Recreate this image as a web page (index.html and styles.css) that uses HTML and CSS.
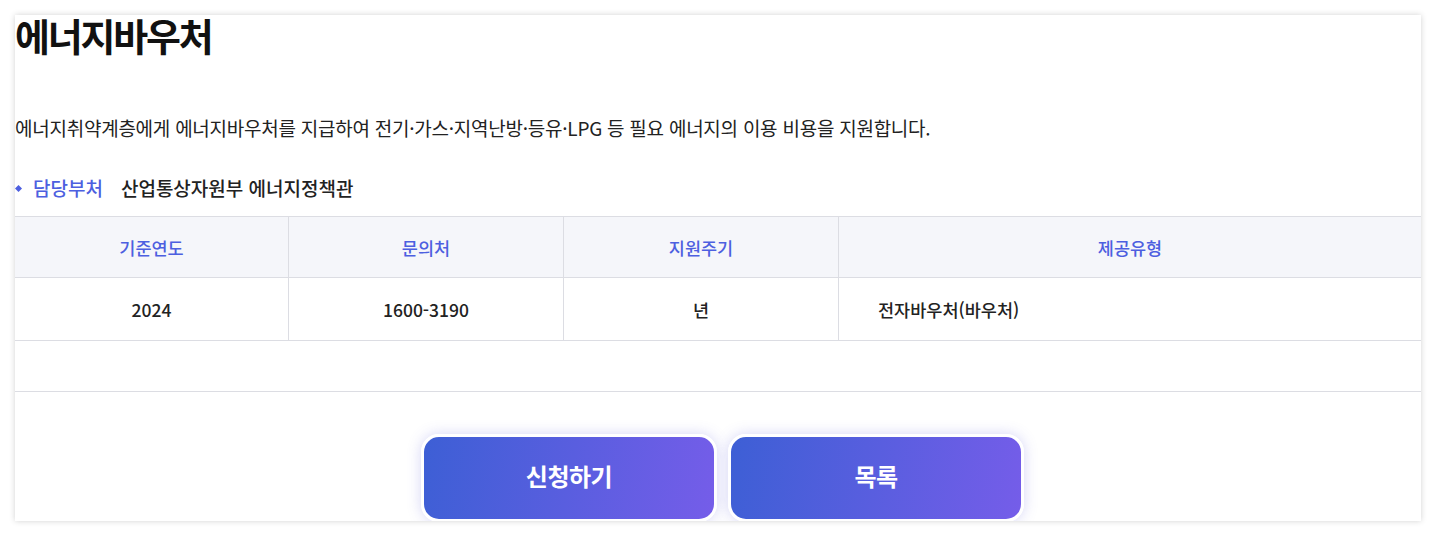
FILE: index.html
```html
<!DOCTYPE html>
<html lang="ko">
<head>
    <meta charset="UTF-8">
    <meta name="viewport" content="width=device-width, initial-scale=1.0">
    <title>에너지바우처</title>
    <link rel="stylesheet" href="styles.css">
</head>
<body>
    <div class="card">
        <h2 class="title">에너지바우처</h2>
        <p class="desc">에너지취약계층에게 에너지바우처를 지급하여 전기·가스·지역난방·등유·LPG 등 필요 에너지의 이용 비용을 지원합니다.</p>

        <div class="dept">
            <span class="dept-label">담당부처</span>
            <span class="dept-name">산업통상자원부 에너지정책관</span>
        </div>

        <table class="info">
            <thead>
                <tr>
                    <th class="c1">기준연도</th>
                    <th class="c2">문의처</th>
                    <th class="c3">지원주기</th>
                    <th>제공유형</th>
                </tr>
            </thead>
            <tbody>
                <tr>
                    <td>2024</td>
                    <td>1600-3190</td>
                    <td>년</td>
                    <td class="left">전자바우처(바우처)</td>
                </tr>
                <tr class="empty">
                    <td colspan="4"></td>
                </tr>
            </tbody>
        </table>

        <div class="actions">
            <button class="btn">신청하기</button>
            <button class="btn">목록</button>
        </div>
    </div>
</body>
</html>
```

FILE: styles.css
```css
body {
    margin: 0;
    background: #fff;
    font-family: "Noto Sans CJK KR", "Noto Sans", sans-serif;
    color: #222;
}
.card {
    margin: 15px;
    height: 506px;
    background: #fff;
    box-shadow: 0 0 6px rgba(0, 0, 0, 0.18);
    overflow: hidden;
}
.title {
    margin: 0;
    font-size: 38px;
    font-weight: 700;
    line-height: 40px;
    letter-spacing: -2.2px;
    color: #111;
}
.desc {
    margin: 60px 0 0;
    font-size: 19px;
    line-height: 26px;
    letter-spacing: -0.25px;
    color: #222;
}
.dept {
    margin-top: 34px;
    display: flex;
    align-items: center;
    font-size: 19px;
    line-height: 26px;
    font-weight: 500;
}
.dept-label {
    position: relative;
    padding-left: 18px;
    color: #4d5fe0;
    margin-right: 18px;
}
.dept-label::before {
    content: "";
    position: absolute;
    left: 1px;
    top: 11px;
    width: 5px;
    height: 5px;
    background: #4d5fe0;
    transform: rotate(45deg);
}
.dept-name {
    color: #222;
}
.info {
    margin-top: 15px;
    width: 100%;
    border-collapse: collapse;
    table-layout: fixed;
    border-top: 1px solid #dcdde3;
}
.info th,
.info td {
    padding: 0;
    border: 1px solid #dcdde3;
    text-align: center;
}
.info tr > :first-child {
    border-left: none;
}
.info tr > :last-child {
    border-right: none;
}
.info th {
    height: 60px;
    background: #f5f6fa;
    color: #4d5fe0;
    font-size: 17.5px;
    font-weight: 500;
}
.info td {
    height: 62px;
    font-size: 17.5px;
    font-weight: 500;
    color: #222;
}
.info .c1 { width: 273px; }
.info .c2 { width: 274px; }
.info .c3 { width: 274px; }
.info td.left {
    text-align: left;
    padding-left: 39px;
}
.info .empty td {
    height: 50px;
}
.actions {
    margin-top: 42px;
    display: flex;
    justify-content: center;
    gap: 11px;
    padding-left: 9px;
}
.btn {
    width: 296px;
    height: 88px;
    border: 3px solid #fff;
    border-radius: 18px;
    background: linear-gradient(100deg, #3d5fd5, #755de9);
    box-shadow: 0 0 14px rgba(90, 90, 220, 0.25);
    color: #fff;
    font-family: inherit;
    font-size: 24px;
    font-weight: 700;
    letter-spacing: -0.5px;
    padding-bottom: 6px;
    cursor: pointer;
}
```
